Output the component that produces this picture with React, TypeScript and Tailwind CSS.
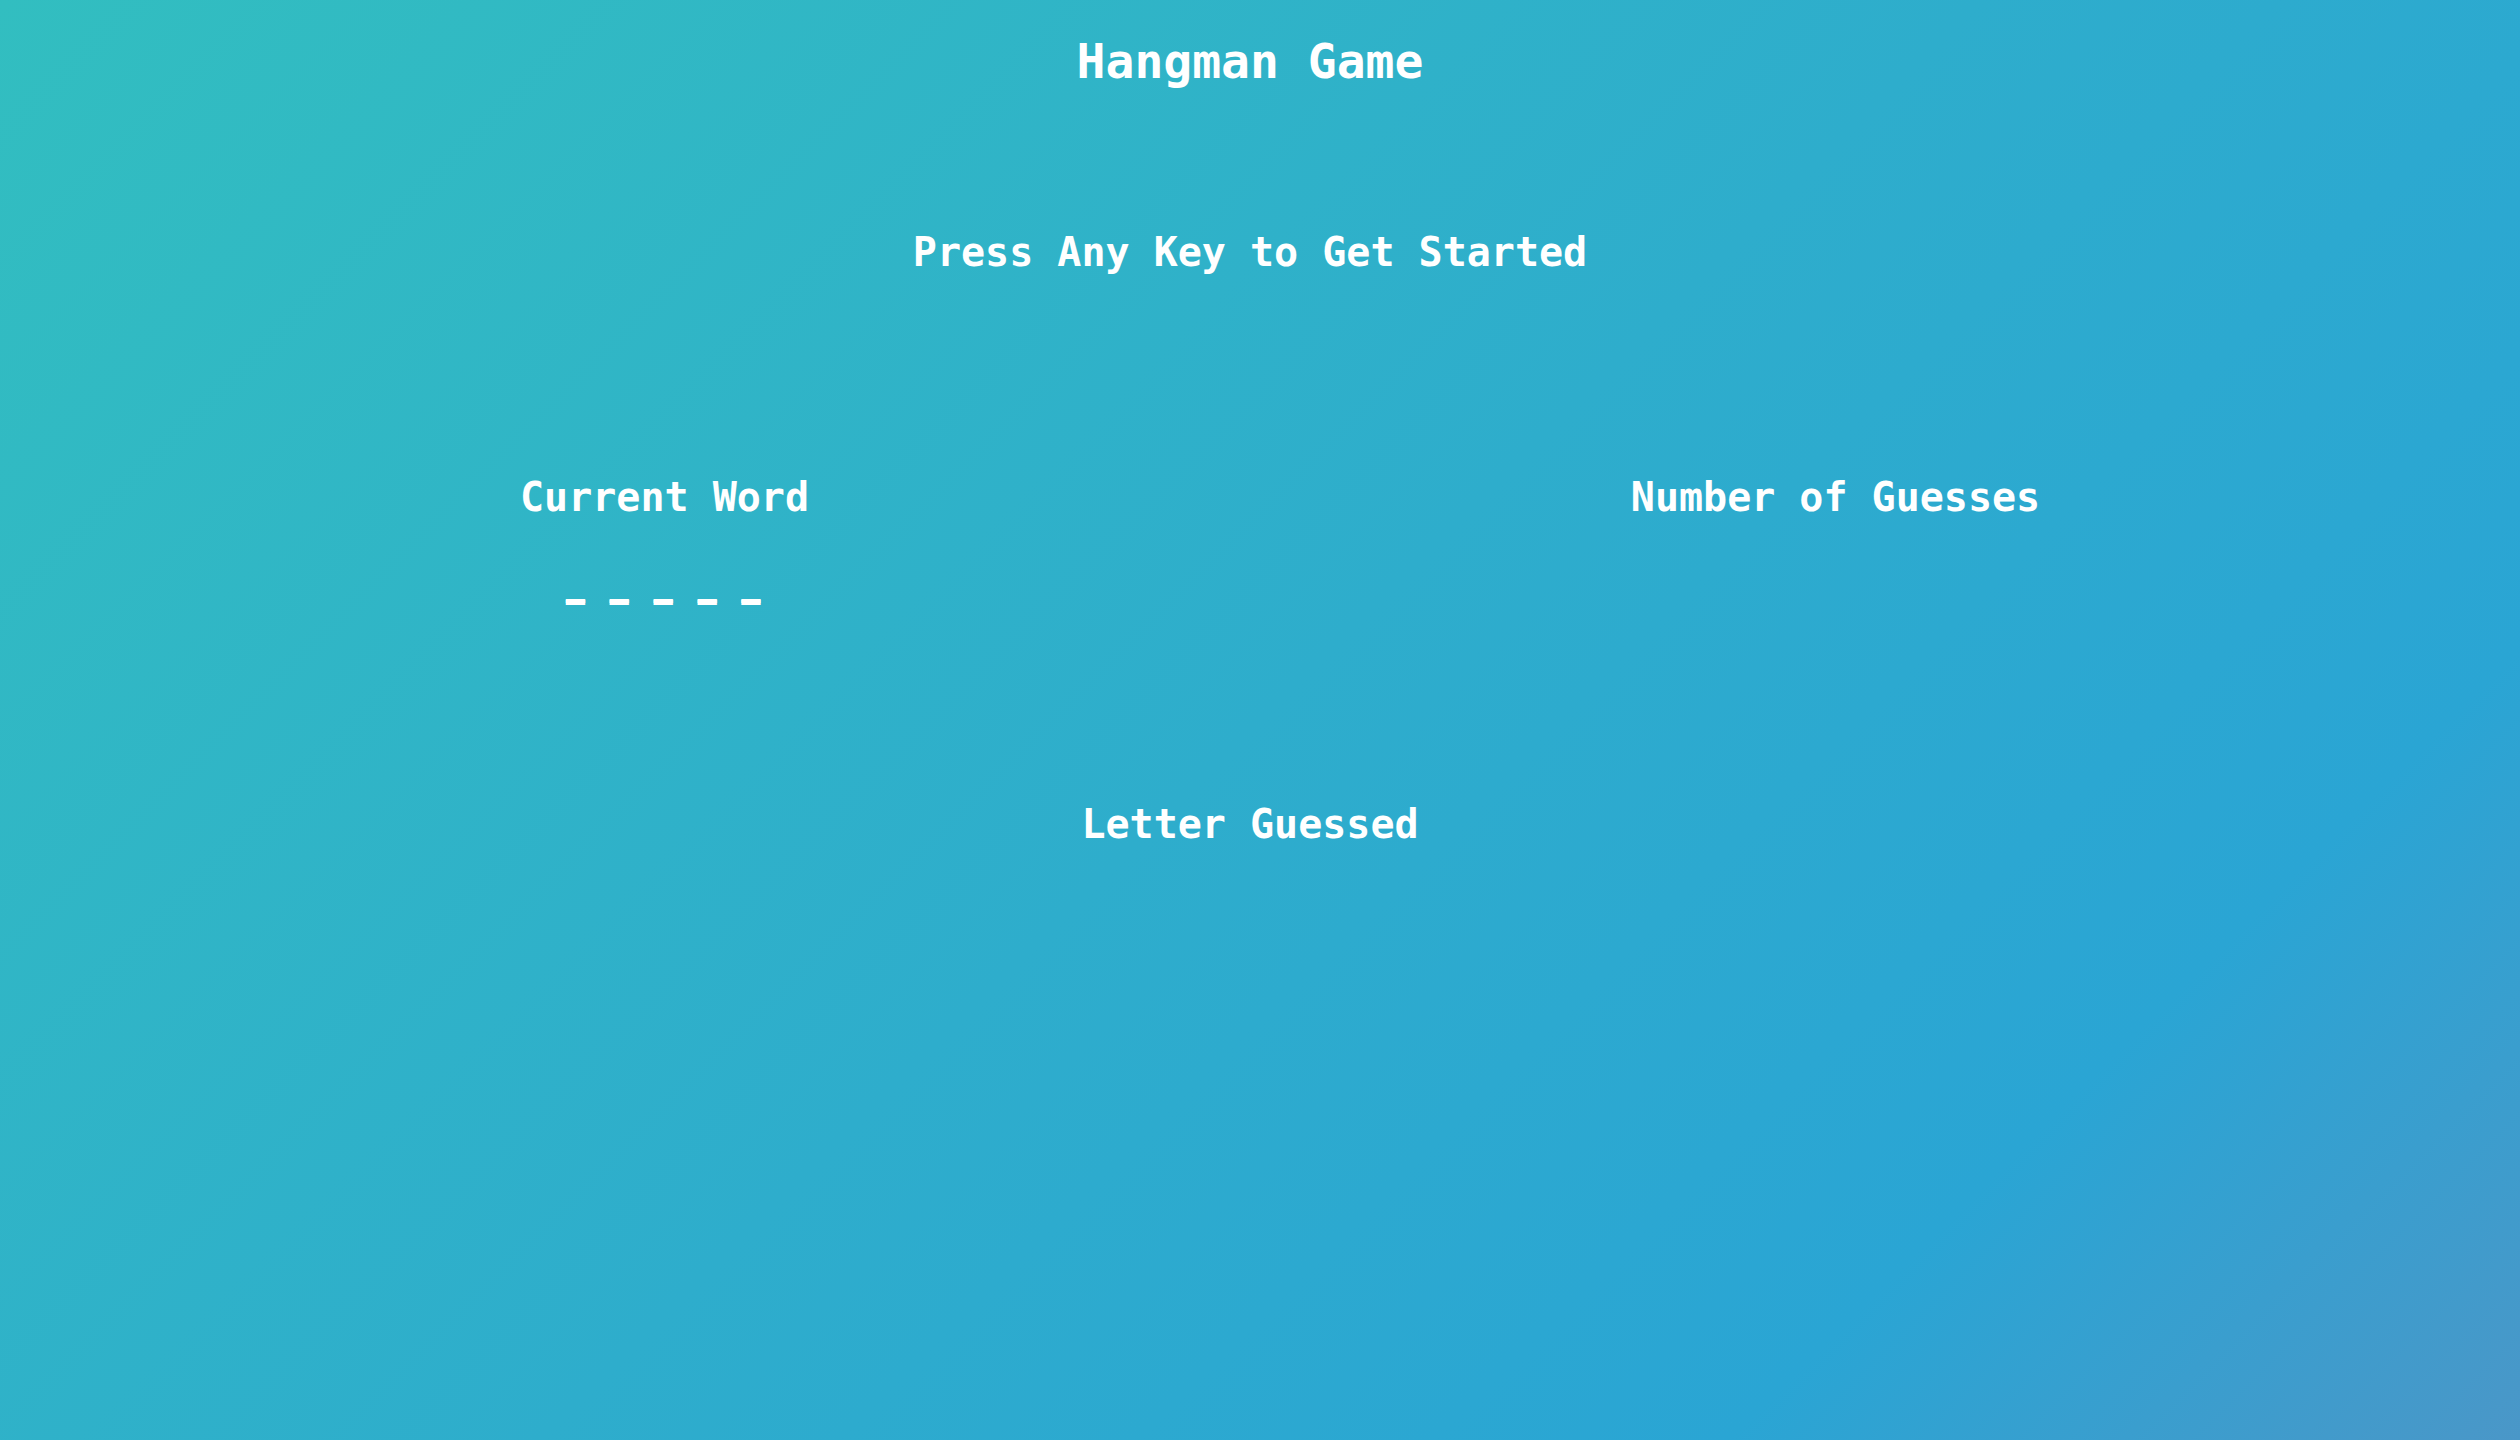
import React from 'react';

const mono = "font-['DejaVu_Sans_Mono','Liberation_Mono',monospace] font-bold text-white";

export default function App() {
  return (
    <div className="min-h-screen w-full bg-[linear-gradient(135deg,#32bec0_0%,#2eadcc_50%,#2aa5d4_80%,#4a97c8_100%)]">
      <div className={`${mono} pl-[79px] pr-[99px] pt-[37px] text-center`}>
        <h1 className="text-[48px] leading-none">Hangman Game</h1>

        <p className="mt-[147px] text-[40px] leading-none">Press Any Key to Get Started</p>

        <div className="mt-[205px] grid grid-cols-2">
          <div className="flex flex-col items-center">
            <h2 className="text-[40px] leading-none">Current Word</h2>
            <p className="mt-[53px] text-[32px] leading-none tracking-[2.7px] whitespace-pre [text-shadow:0_-2px_0_#fff,0_-3px_0_#fff]">_ _ _ _ _</p>
          </div>
          <div className="flex flex-col items-center">
            <h2 className="text-[40px] leading-none">Number of Guesses</h2>
          </div>
        </div>

        <h2 className="mt-[202px] text-[40px] leading-none">Letter Guessed</h2>
      </div>
    </div>
  );
}
